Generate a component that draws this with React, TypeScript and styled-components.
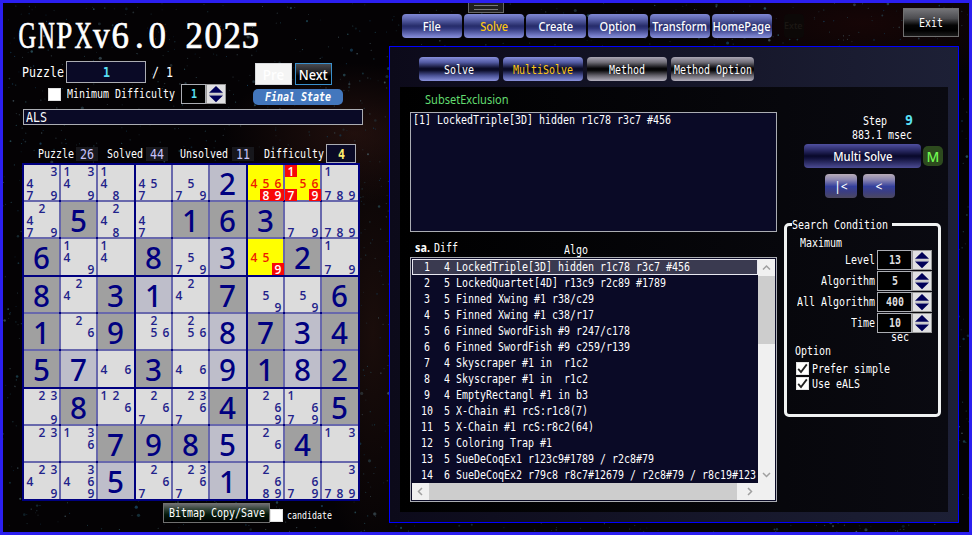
import React from "react";
import styled, { createGlobalStyle, css } from "styled-components";

const GlobalStyle = createGlobalStyle`
  * { box-sizing: border-box; }
  body { margin: 0; background: #050205; }
`;

const UI_FONT = `"Noto Sans", "Open Sans", sans-serif`;
const MONO_FONT = `"DejaVu Sans Mono", monospace`;

/* Fixed-pitch text squeezed to a narrow advance */
const MonoBox = styled.span<{ $w: number; $h: number }>`
  display: flex;
  flex: none;
  width: ${(p) => p.$w}px;
  height: ${(p) => p.$h}px;
  white-space: pre;
`;
const MonoText = styled.span<{ $size: number; $scale: number; $h: number; $color?: string; $bold?: boolean; $italic?: boolean }>`
  flex: none;
  font-family: ${MONO_FONT};
  font-size: ${(p) => p.$size}px;
  line-height: ${(p) => p.$h}px;
  font-weight: ${(p) => (p.$bold ? 700 : 400)};
  font-style: ${(p) => (p.$italic ? "italic" : "normal")};
  color: ${(p) => p.$color ?? "#fff"};
  transform: scaleX(${(p) => p.$scale});
  transform-origin: left center;
`;
type MonoProps = { children: string; adv?: number; size?: number; color?: string; bold?: boolean; italic?: boolean };
function Mono({ children, adv = 6, size = 12, color, bold, italic }: MonoProps) {
  const h = Math.round(size) + 2;
  return (
    <MonoBox $w={children.length * adv} $h={h}>
      <MonoText $size={size} $h={h} $scale={adv / (size * 0.602)} $color={color} $bold={bold} $italic={italic}>
        {children}
      </MonoText>
    </MonoBox>
  );
}
const Label = styled.span<{ $sx?: number; $left?: boolean }>`
  display: inline-block;
  transform: scaleX(${(p) => p.$sx ?? 0.92});
  transform-origin: ${(p) => (p.$left ? "left" : "center")};
`;

const Window = styled.div`
  position: relative;
  width: 972px;
  height: 535px;
  overflow: hidden;
  border: 3px solid #2b1ff0;
  display: grid;
  grid-template-columns: 386px 1fr;
  background:
    radial-gradient(ellipse 130px 70px at 350px 130px, rgba(60, 28, 22, 0.5), transparent),
    radial-gradient(ellipse 60px 230px at 370px 330px, rgba(48, 24, 18, 0.5), transparent),
    radial-gradient(ellipse 190px 60px at 860px 20px, rgba(34, 8, 8, 0.6), transparent),
    #040204;
  font-family: ${UI_FONT};
  color: #fff;
`;
const Sky = styled.svg`
  position: absolute;
  inset: 0;
  width: 966px;
  height: 529px;
`;

function makeStars() {
  let seed = 71;
  const rnd = () => {
    seed = (seed * 16807) % 2147483647;
    return seed / 2147483647;
  };
  const tints = ["#2c5662", "#1d4350", "#2a3f48", "#42555c", "#17405a"];
  return Array.from({ length: 3600 }, () => ({
    x: rnd() * 966,
    y: rnd() * 529,
    r: 0.55 + Math.pow(rnd(), 8) * 1.1,
    c: tints[Math.floor(rnd() * tints.length)],
    o: 0.35 + rnd() * 0.6,
  }));
}
const stars = makeStars();

const Left = styled.section`
  position: relative;
  display: flex;
  flex-direction: column;
`;
const Right = styled.section`
  position: relative;
  display: flex;
  flex-direction: column;
`;
const Row = styled.div<{ $h: number; $pl?: number; $mt?: number }>`
  display: flex;
  flex: none;
  align-items: center;
  height: ${(p) => p.$h}px;
  padding-left: ${(p) => p.$pl ?? 0}px;
  margin-top: ${(p) => p.$mt ?? 0}px;
`;
const Gap = styled.span<{ $w: number }>`
  flex: none;
  width: ${(p) => p.$w}px;
`;

const Title = styled.h1`
  display: flex;
  margin: 13px 0 0 15px;
  height: 40px;
  font: 400 37px/40px "Liberation Serif", serif;
  -webkit-text-stroke: 0.7px #fff;
`;
const TitleChar = styled.span<{ $sx: number }>`
  display: flex;
  justify-content: center;
  width: 18.6px;
  white-space: pre;
  transform: scaleX(${(p) => p.$sx});
`;
const titleScale: Record<string, number> = { G: 0.66, N: 0.63, P: 0.78, X: 0.66, v: 0.9 };

const Field = styled.div<{ $w: number; $h: number; $left?: boolean; $black?: boolean }>`
  display: flex;
  flex: none;
  align-items: center;
  justify-content: ${(p) => (p.$left ? "flex-start" : "center")};
  width: ${(p) => p.$w}px;
  height: ${(p) => p.$h}px;
  padding-left: ${(p) => (p.$left ? 2 : 0)}px;
  border: 1px solid #abadb3;
  background: ${(p) => (p.$black ? "#000" : "#0a0a26")};
`;
const Tick = styled.span`
  display: flex;
  flex: none;
  align-items: center;
  justify-content: center;
  width: 13px;
  height: 13px;
  background: #fff;
  border: 1px solid #e2e2e2;
`;
const SpinButton = styled.span`
  display: flex;
  flex: none;
  width: 20px;
  height: 20px;
  background: #e0e0e2;
  border: 1px solid #999;
`;
function Spin() {
  return (
    <SpinButton>
      <svg width="18" height="18" viewBox="0 0 18 18">
        <path d="M2 7.8 9 1l7 6.8zM2 10.4h14L9 17.2z" fill="#000058" />
        <path d="M2 9.1h14" stroke="#aaa" strokeWidth="0.8" />
      </svg>
    </SpinButton>
  );
}
const SquareButton = styled.button<{ $w: number; $h: number; $kind: "blank" | "next" | "grey" | "green" }>`
  display: flex;
  flex: none;
  align-items: center;
  justify-content: center;
  width: ${(p) => p.$w}px;
  height: ${(p) => p.$h}px;
  padding: 0;
  font: 500 13.5px/18px ${UI_FONT};
  color: #fff;
  white-space: nowrap;
  ${(p) =>
    ({
      blank: css`background: #f4f4f4; border: 1px solid #d8dadd; padding-top: 2px;`,
      next: css`background: linear-gradient(#4b4b50, #28282b 35%, #000 60%, #000); border: 1px solid #3a90cc; padding-top: 2px;`,
      grey: css`background: linear-gradient(#747478, #4c4c50 35%, #050505 60%, #000 80%, #1a1a1a); border: 1px solid #707070;`,
      green: css`background: linear-gradient(#6c6c70, #263a2c 35%, #03180a 60%, #000); border: 1px solid #707070;`,
    })[p.$kind]}
`;
const StatePill = styled.span`
  display: flex;
  align-items: center;
  justify-content: center;
  width: 90px;
  height: 16px;
  border-radius: 5px;
  background: #4377bd;
`;
const Count = styled.span`
  display: flex;
  flex: none;
  align-items: center;
  justify-content: center;
  width: 22px;
  height: 14px;
  background: #17171c;
`;

/* Board */
const Board = styled.div`
  display: grid;
  flex: none;
  grid-template-columns: 35px 35px 36px 35px 35px 36px 35px 35px 36px;
  grid-template-rows: 35px 35px 36px 35px 35px 36px 35px 35px 36px;
  gap: 2px;
  width: 338px;
  height: 338px;
  margin-left: 19px;
  padding: 2px;
  background: #000080;
`;
type Kind = "given" | "solved" | "open" | "hit";
const fills: Record<Kind, string> = { given: "#a0a0a0", solved: "#bebeca", open: "#dcdcdc", hit: "#ffff00" };
const Cell = styled.div<{ $kind: Kind; $right: boolean; $bottom: boolean }>`
  display: grid;
  grid-template-columns: repeat(3, 12px);
  grid-template-rows: repeat(3, 12px);
  background: ${(p) => fills[p.$kind]};
  box-shadow: ${(p) => (p.$right ? "2px 0 0 #6868ac" : "0 0 0 transparent")},
    ${(p) => (p.$bottom ? "0 2px 0 #6868ac" : "0 0 0 transparent")};
`;
const BigDigit = styled.span`
  grid-area: 1 / 1 / 4 / 4;
  width: 35px;
  height: 35px;
  text-align: center;
  font: 500 31.5px/35px ${UI_FONT};
  color: #000080;
  transform: scaleX(0.94);
`;
const Candidate = styled.span<{ $n: number; $tone: "normal" | "red" | "out" }>`
  grid-column: ${(p) => ((p.$n - 1) % 3) + 1};
  grid-row: ${(p) => Math.floor((p.$n - 1) / 3) + 1};
  width: 12px;
  height: 12px;
  text-align: center;
  font: 600 12px/13px "Open Sans", sans-serif;
  color: ${(p) => ({ normal: "#22228a", red: "#ee1c00", out: "#fff" })[p.$tone]};
  background: ${(p) => (p.$tone === "out" ? "#f80808" : "transparent")};
`;

/* g = given, s = solved, c = candidates, h = highlighted; digits after "x" are excluded */
const board = [
  "c3479 c1349 c148 c457 c579 s2 h456x89 h56x179 c1789",
  "c2479 g5 c248 c47 g1 g6 g3 c79 c789",
  "g6 c149 c14 g8 c579 s3 h45x9 g2 c179",
  "g8 c24 g3 s1 c24 g7 c59 c59 g6",
  "g1 c26 g9 c256 c256 s8 g7 s3 g4",
  "g5 s7 c46 g3 c46 s9 g1 s8 g2",
  "c239 g8 c126 c267 c2367 g4 c269 c1679 g5",
  "c23 c136 g7 g9 g8 s5 c26 g4 c13",
  "c2349 c3469 s5 c267 c2367 s1 c2689 c679 c3789",
].map((r) => r.split(" "));

function BoardCell({ code, r, c }: { code: string; r: number; c: number }) {
  const kind = ({ g: "given", s: "solved", c: "open", h: "hit" } as Record<string, Kind>)[code[0]];
  const [keep, out = ""] = code.slice(1).split("x");
  const cell = { $kind: kind, $right: c % 3 < 2, $bottom: r % 3 < 2 };
  if (kind === "given" || kind === "solved")
    return (
      <Cell {...cell}>
        <BigDigit>{keep}</BigDigit>
      </Cell>
    );
  return (
    <Cell {...cell}>
      {[...(keep + out)].sort().map((d) => (
        <Candidate key={d} $n={+d} $tone={out.includes(d) ? "out" : kind === "hit" ? "red" : "normal"}>
          {d}
        </Candidate>
      ))}
    </Cell>
  );
}

/* Right side */
type Tone = "nav" | "blue" | "grey" | "deep" | "step";
const tones: Record<Tone, string> = {
  nav: "linear-gradient(#8088d4, #6068b0 20%, #262c6a 50%, #30367a 60%, #7880cc 92%, #8a90d8)",
  blue: "linear-gradient(#8890dc, #545ca4 22%, #0b0c28 47%, #0b0c28 55%, #4c5498 78%, #8a92dc)",
  grey: "linear-gradient(#aaa6b4, #706e78 22%, #060608 47%, #060608 55%, #68666f 78%, #b4b0be)",
  deep: "linear-gradient(#5050a0, #2c2c68 25%, #08082a 50%, #12123c 60%, #4c4c94)",
  step: "linear-gradient(#b8acb8, #8884b0 25%, #34409c 52%, #3c3e80 75%, #4c4860)",
};
const RoundButton = styled.button<{ $w: number; $tone: Tone; $active?: boolean; $size?: number }>`
  display: flex;
  flex: none;
  align-items: center;
  justify-content: center;
  width: ${(p) => p.$w}px;
  height: 24px;
  padding: 1px 0 0;
  border: 0;
  border-radius: 4px;
  background: ${(p) => tones[p.$tone]};
  color: ${(p) => (p.$active ? "#ffc814" : "#fff")};
  font: 500 ${(p) => p.$size ?? 12}px/18px ${UI_FONT};
  white-space: nowrap;
`;
const NavRow = styled.nav`
  display: flex;
  flex: none;
  gap: 2px;
  height: 24px;
  margin: 11px 0 0 13px;
`;
const FadedItem = styled.span`
  margin-left: 10px;
  width: 20px;
  border-radius: 4px;
  background: #0c0807;
  color: #1d1815;
  font: 500 9px/24px ${UI_FONT};
`;
const ExitSlot = styled.div`
  margin-left: 97px;
  margin-top: -6px;
`;
const Handle = styled.span`
  position: absolute;
  left: 79px;
  top: -3px;
  width: 36px;
  height: 13px;
  padding: 6px 5px 0;
  border: 1px solid #686868;
  background: #202020;
  &::before {
    content: "";
    display: block;
    margin-top: -2px;
    height: 3px;
    border: solid #777;
    border-width: 1px 0;
  }
`;
const Panel = styled.main`
  flex: none;
  width: 570px;
  height: 477px;
  margin-top: 8px;
  border: 1px solid #0000ff;
  background: linear-gradient(90deg, #0c0a1a, #1d2036);
`;
const TabRow = styled.div`
  display: flex;
  gap: 4px;
  margin: 10px 0 6px 29px;
`;
const Inner = styled.div`
  display: flex;
  width: 548px;
  height: 425px;
  margin-left: 10px;
  background: linear-gradient(90deg, #000, #0a0a11);
`;
const ResultColumn = styled.div`
  display: flex;
  flex-direction: column;
  width: 377px;
  padding-left: 10px;
`;
const MethodName = styled.div`
  height: 25px;
  padding: 3px 0 0 15px;
  color: #62dc70;
  font: 400 12px/20px ${UI_FONT};
`;
const Output = styled.div`
  width: 367px;
  height: 120px;
  padding: 0 2px;
  border: 1px solid #abadb3;
  background: #0a0a26;
`;
const Sa = styled.b`
  width: 19px;
  font: 700 11.5px/14px ${UI_FONT};
`;
const ListBox = styled.div`
  display: grid;
  grid-template-columns: 346px 17px;
  grid-template-rows: 224px 17px;
  width: 367px;
  height: 245px;
  padding: 1px;
  border: 1px solid #abadb3;
  background: #0a0a26;
`;
const List = styled.div`
  overflow: hidden;
`;
const Item = styled.div<{ $selected: boolean }>`
  display: flex;
  align-items: center;
  height: 16px;
  border: 1px solid ${(p) => (p.$selected ? "#e8e8f0" : "transparent")};
  background: ${(p) => (p.$selected ? "#3a3a50" : "transparent")};
`;
const ItemNo = styled.span`
  display: flex;
  justify-content: center;
  width: 28px;
`;
const ItemDiff = styled.span`
  display: flex;
  justify-content: flex-end;
  width: 9px;
  margin-right: 6px;
`;
const VBar = styled.div`
  display: flex;
  flex-direction: column;
  background: #f0f0f0;
`;
const HBar = styled.div`
  display: flex;
  grid-column: 1 / 3;
  background: #f0f0f0;
`;
const VThumb = styled.div`
  height: 68px;
  margin-bottom: 122px;
  background: #cdcdcd;
`;
const HThumb = styled.div`
  width: 308px;
  background: #cdcdcd;
`;
const Side = styled.aside`
  display: flex;
  flex-direction: column;
  width: 171px;
`;
const MBadge = styled.span`
  width: 20px;
  height: 20px;
  margin-left: 2px;
  border-radius: 5px;
  background: #2d4a1e;
  color: #72f850;
  text-align: center;
  font: 500 14px/21px ${UI_FONT};
`;
const Group = styled.fieldset`
  width: 157px;
  height: 200px;
  margin: 19px 0 0 7px;
  padding: 0;
  min-width: 0;
  border: 3px solid #f0f2f2;
  border-radius: 5px;
`;
const Legend = styled.legend`
  display: flex;
  align-items: center;
  height: 15px;
  margin-left: 5px;
  padding: 0 4px 0 0;
`;
const SettingRow = styled.div`
  display: flex;
  align-items: center;
  justify-content: flex-end;
  height: 20px;
  margin: 0 6px 1px 0;
`;

const arrows = { up: "M5 10.5 8.5 7l3.5 3.5", down: "M5 7l3.5 3.5L12 7", left: "M10 5 6.5 8.5 10 12", right: "M7 5l3.5 3.5L7 12" };
function Arrow({ dir }: { dir: keyof typeof arrows }) {
  return (
    <svg width="17" height="17" viewBox="0 0 17 17">
      <path d={arrows[dir]} fill="none" stroke="#a0a0a0" strokeWidth="1.5" />
    </svg>
  );
}
function Check() {
  return (
    <svg width="11" height="11" viewBox="0 0 11 11">
      <path d="M1.2 5.8 4 9 9.8 1.4" fill="none" stroke="#222" strokeWidth="1.8" />
    </svg>
  );
}

const results: [number, string][] = [
  [4, "LockedTriple[3D] hidden r1c78 r3c7 #456"],
  [5, "LockedQuartet[4D] r13c9 r2c89 #1789"],
  [5, "Finned Xwing #1 r38/c29"],
  [5, "Finned Xwing #1 c38/r17"],
  [6, "Finned SwordFish #9 r247/c178"],
  [6, "Finned SwordFish #9 c259/r139"],
  [4, "Skyscraper #1 in  r1c2"],
  [4, "Skyscraper #1 in  r1c2"],
  [4, "EmptyRectangl #1 in b3"],
  [5, "X-Chain #1 rcS:r1c8(7)"],
  [5, "X-Chain #1 rcS:r8c2(64)"],
  [5, "Coloring Trap #1"],
  [5, "SueDeCoqEx1 r123c9#1789 / r2c8#79"],
  [6, "SueDeCoqEx2 r79c8 r8c7#12679 / r2c8#79 / r8c19#123"],
];
const settings = [
  ["Level", "13"],
  ["Algorithm", "5"],
  ["All Algorithm", "400"],
  ["Time", "10"],
];
const cyan = "#5ae0f4";

function BoardSide() {
  return (
    <Left>
      <Title>
        {[..."GNPXv6.0 2025"].map((ch, i) => (
          <TitleChar key={i} $sx={titleScale[ch] ?? 0.94}>{ch}</TitleChar>
        ))}
      </Title>
      <Row $h={22} $pl={19} $mt={5}>
        <Mono adv={7} size={14}>Puzzle</Mono>
        <Gap $w={2} />
        <Field $w={80} $h={22}><Mono adv={7} size={14} color={cyan} bold>1</Mono></Field>
        <Gap $w={6} />
        <Mono adv={7} size={14}>/ 1</Mono>
        <Gap $w={82} />
        <Row $h={22} $mt={4}>
          <SquareButton $w={37} $h={22} $kind="blank">Pre</SquareButton>
          <Gap $w={3} />
          <SquareButton $w={37} $h={22} $kind="next"><Label $sx={0.95}>Next</Label></SquareButton>
        </Row>
      </Row>
      <Row $h={20} $pl={45} $mt={1}>
        <Tick />
        <Gap $w={6} />
        <Mono>Minimum Difficulty</Mono>
        <Gap $w={6} />
        <Field $w={25} $h={20} $black><Mono color={cyan} bold>1</Mono></Field>
        <Spin />
        <Gap $w={27} />
        <Row $h={16} $mt={5}>
          <StatePill><Mono bold italic>Final State</Mono></StatePill>
        </Row>
      </Row>
      <Row $h={16} $pl={20} $mt={5}>
        <Field $w={340} $h={16} $left><Mono adv={7} size={13.5}>ALS</Mono></Field>
      </Row>
      <Row $h={19} $pl={35} $mt={19}>
        <Mono>Puzzle</Mono>
        <Gap $w={2} />
        <Count><Mono adv={7} size={13.5} color="#c8c4f8">26</Mono></Count>
        <Gap $w={9} />
        <Mono>Solved</Mono>
        <Gap $w={3} />
        <Count><Mono adv={7} size={13.5} color="#c8c4f8">44</Mono></Count>
        <Gap $w={12} />
        <Mono>Unsolved</Mono>
        <Gap $w={4} />
        <Count><Mono adv={7} size={13.5} color="#c8c4f8">11</Mono></Count>
        <Gap $w={10} />
        <Mono>Difficulty</Mono>
        <Gap $w={2} />
        <Field $w={30} $h={19}><Mono adv={7} size={13.5} color="#ffef70" bold>4</Mono></Field>
      </Row>
      <Board>
        {board.flatMap((row, r) => row.map((code, c) => <BoardCell key={`${r}-${c}`} code={code} r={r} c={c} />))}
      </Board>
      <Row $h={20} $pl={160} $mt={2}>
        <SquareButton $w={107} $h={20} $kind="green"><Mono>Bitmap Copy/Save</Mono></SquareButton>
        <Row $h={20} $mt={5}>
          <Tick />
          <Gap $w={4} />
          <Mono adv={5} size={10}>candidate</Mono>
        </Row>
      </Row>
    </Left>
  );
}

function SolverSide() {
  return (
    <Right>
      <Handle />
      <NavRow>
        {["File", "Solve", "Create", "Option", "Transform", "HomePage"].map((n) => (
          <RoundButton key={n} $w={60} $tone="nav" $active={n === "Solve"}><Label>{n}</Label></RoundButton>
        ))}
        <FadedItem>Exte</FadedItem>
        <ExitSlot>
          <SquareButton $w={56} $h={29} $kind="grey"><Mono size={12.5}>Exit</Mono></SquareButton>
        </ExitSlot>
      </NavRow>
      <Panel>
        <TabRow>
          <RoundButton $w={80} $tone="blue"><Mono>Solve</Mono></RoundButton>
          <RoundButton $w={80} $tone="blue"><Mono color="#ffc814">MultiSolve</Mono></RoundButton>
          <RoundButton $w={80} $tone="grey"><Mono>Method</Mono></RoundButton>
          <RoundButton $w={83} $tone="grey"><Mono>Method Option</Mono></RoundButton>
        </TabRow>
        <Inner>
          <ResultColumn>
            <MethodName><Label $left>SubsetExclusion</Label></MethodName>
            <Output><Mono>[1] LockedTriple[3D] hidden r1c78 r3c7 #456</Mono></Output>
            <Row $h={25} $pl={5}>
              <Row $h={14} $mt={6}>
                <Sa><Label $left $sx={0.94}>sa.</Label></Sa>
                <Mono>Diff</Mono>
              </Row>
              <Gap $w={106} />
              <Row $h={14} $mt={10}><Mono>Algo</Mono></Row>
            </Row>
            <ListBox>
              <List>
                {results.map(([diff, text], i) => (
                  <Item key={i} $selected={i === 0}>
                    <ItemNo><Mono>{String(i + 1)}</Mono></ItemNo>
                    <ItemDiff><Mono>{String(diff)}</Mono></ItemDiff>
                    <Mono>{text}</Mono>
                  </Item>
                ))}
              </List>
              <VBar>
                <Arrow dir="up" />
                <VThumb />
                <Arrow dir="down" />
              </VBar>
              <HBar>
                <Arrow dir="left" />
                <HThumb />
                <Gap $w={4} />
                <Arrow dir="right" />
              </HBar>
            </ListBox>
          </ResultColumn>
          <Side>
            <Row $h={15} $pl={86} $mt={26}>
              <Mono>Step</Mono>
              <Gap $w={18} />
              <Mono adv={8} size={14.5} color={cyan} bold>9</Mono>
            </Row>
            <Row $h={14} $pl={75}><Mono>883.1 msec</Mono></Row>
            <Row $h={24} $pl={27} $mt={2}>
              <RoundButton $w={117} $tone="deep" $size={12.5}><Label $sx={0.9}>Multi Solve</Label></RoundButton>
              <MBadge>M</MBadge>
            </Row>
            <Row $h={24} $pl={48} $mt={6}>
              <RoundButton $w={32} $tone="step">|&lt;</RoundButton>
              <Gap $w={6} />
              <RoundButton $w={32} $tone="step">&lt;</RoundButton>
            </Row>
            <Group>
              <Legend><Mono>Search Condition</Mono></Legend>
              <Row $h={14} $pl={13} $mt={4}><Mono>Maximum</Mono></Row>
              {settings.map(([label, value]) => (
                <SettingRow key={label}>
                  <Mono>{label}</Mono>
                  <Gap $w={2} />
                  <Field $w={35} $h={20} $black><Mono color="#dedede" bold>{value}</Mono></Field>
                  <Spin />
                </SettingRow>
              ))}
              <Row $h={11} $pl={104} $mt={-3}><Mono>sec</Mono></Row>
              <Row $h={14} $pl={8} $mt={2}><Mono>Option</Mono></Row>
              <Row $h={15} $pl={9} $mt={3}><Tick><Check /></Tick><Gap $w={3} /><Mono>Prefer simple</Mono></Row>
              <Row $h={15} $pl={9}><Tick><Check /></Tick><Gap $w={3} /><Mono>Use eALS</Mono></Row>
            </Group>
          </Side>
        </Inner>
      </Panel>
    </Right>
  );
}

export default function App() {
  return (
    <>
      <GlobalStyle />
      <Window>
        <Sky viewBox="0 0 966 529">
          {stars.map((s, i) => (
            <circle key={i} cx={s.x} cy={s.y} r={s.r} fill={s.c} opacity={s.o} />
          ))}
        </Sky>
        <BoardSide />
        <SolverSide />
      </Window>
    </>
  );
}
